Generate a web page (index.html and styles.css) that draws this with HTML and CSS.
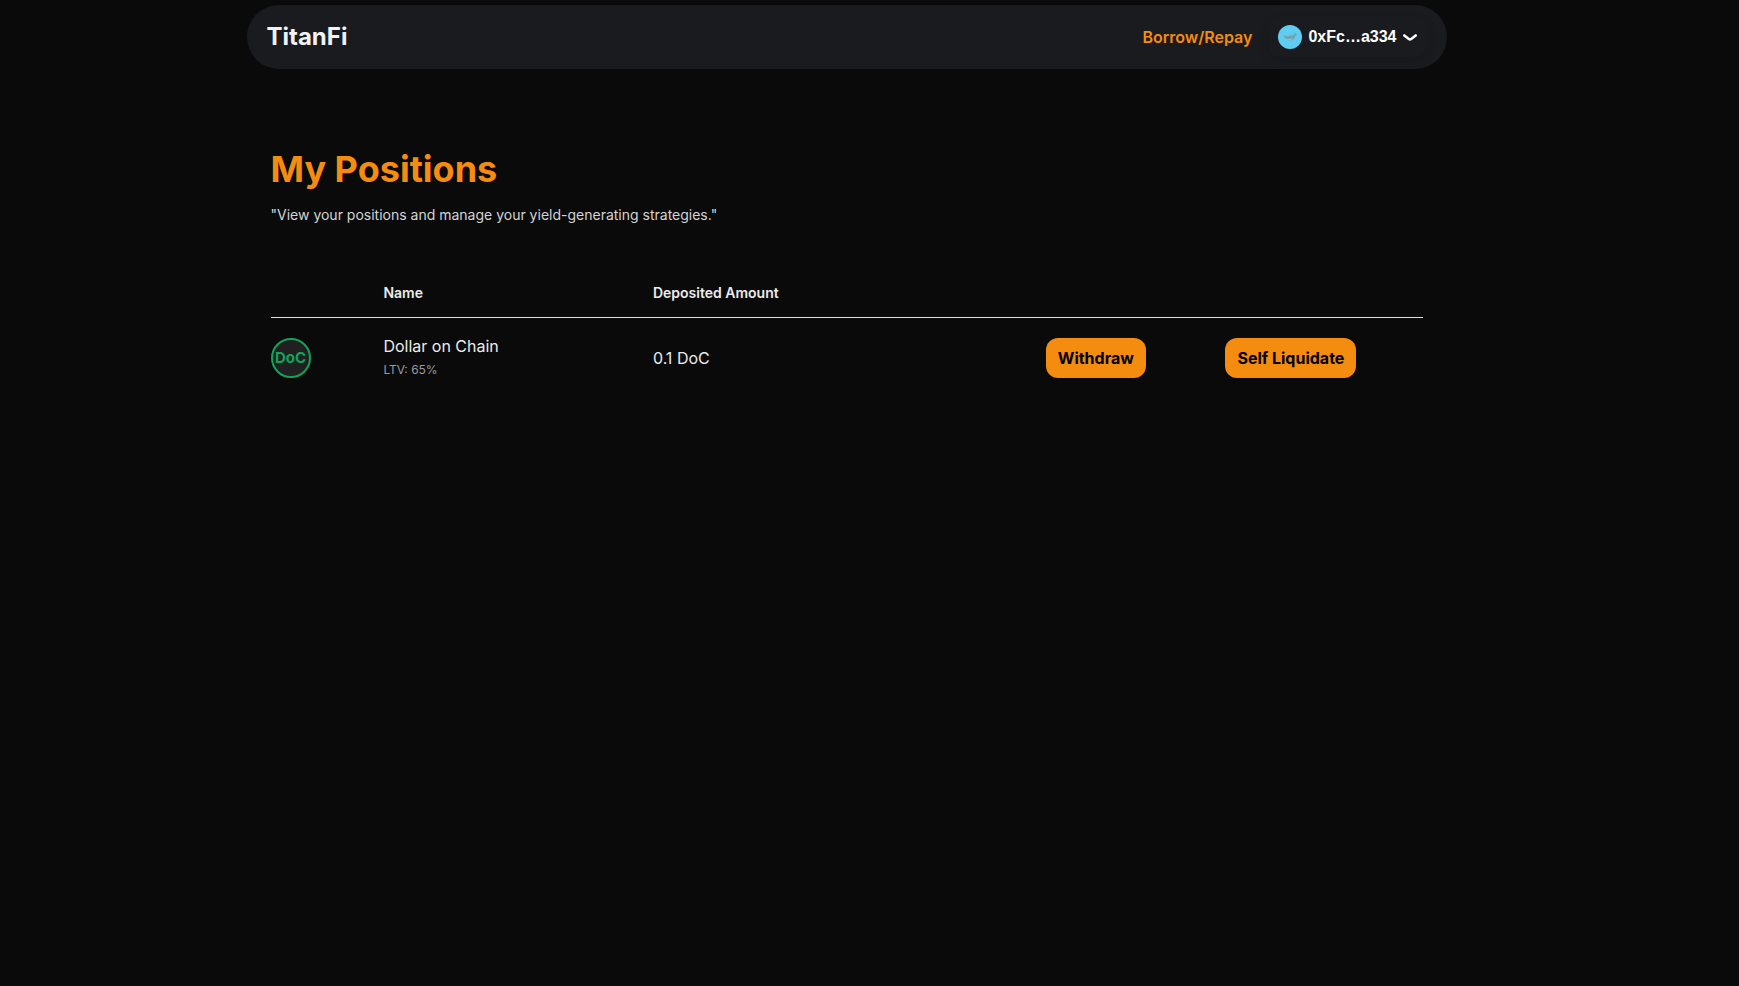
FILE: index.html
```html
<!DOCTYPE html>
<html lang="en">
<head>
<meta charset="utf-8">
<meta name="viewport" content="width=device-width, initial-scale=1">
<title>TitanFi</title>
<link rel="stylesheet" href="styles.css">
</head>
<body class="page">
<header class="navbar">
  <a class="brand" href="#">TitanFi</a>
  <nav class="nav-actions">
    <a class="nav-link" href="#">Borrow/Repay</a>
    <button class="account" type="button">
      <svg class="account-avatar" viewBox="0 0 24 24" aria-hidden="true">
        <circle cx="12" cy="12" r="12" fill="#5fcdf1"/>
        <path d="M5 10.300c1.500-.3 3 .9 5.500.7 2.500-.1 4-1 5.500-1.500l1.300-2.300.7 2 1.200.3-1.500 1.300c-.8 2.800-2.700 4.700-5.200 4.700-3 0-5.500-1.700-7.500-5.200z" fill="#6fa5b2"/>
        <path d="M7.500 13.500c2.500.9 5 .8 7.500-.5-1.500 2.500-5.500 3-7.500.5z" fill="#a0bdc2"/>
      </svg>
      <span>0xFc…a334</span>
      <svg class="account-chevron" viewBox="0 0 14 7" aria-hidden="true">
        <path d="M1.300 1.400 5.800 4.900a2 2 0 0 0 2.400 0l4.500-3.500" fill="none" stroke="#fff" stroke-width="2.500" stroke-linecap="round" stroke-linejoin="round"/>
      </svg>
    </button>
  </nav>
</header>
<main class="content">
  <h1 class="title">My Positions</h1>
  <p class="subtitle">"View your positions and manage your yield-generating strategies."</p>
  <table class="positions">
    <colgroup>
      <col class="col-token">
      <col class="col-name">
      <col class="col-amount">
      <col class="col-withdraw">
      <col class="col-liquidate">
    </colgroup>
    <thead>
      <tr>
        <td></td>
        <th scope="col">Name</th>
        <th scope="col">Deposited Amount</th>
        <td></td>
        <td></td>
      </tr>
    </thead>
    <tbody>
      <tr>
        <td><span class="token">DoC</span></td>
        <td>
          <div class="asset-name">Dollar on Chain</div>
          <div class="asset-ltv">LTV: 65%</div>
        </td>
        <td>0.1 DoC</td>
        <td><button class="action" type="button">Withdraw</button></td>
        <td><button class="action" type="button">Self Liquidate</button></td>
      </tr>
    </tbody>
  </table>
</main>
</body>
</html>
```

FILE: styles.css
```css
* {
  box-sizing: border-box;
}

.page {
  margin: 0;
  min-height: 100vh;
  padding: 5px 46px 0 0;
  background: #0a0a0a;
  color: #ececec;
  font: 16px/24px Inter, sans-serif;
}

.navbar {
  display: flex;
  align-items: center;
  justify-content: space-between;
  max-width: 1200px;
  height: 64px;
  margin: 0 auto;
  padding: 0 20px;
  border-radius: 32px;
  background: #1a1b1f;
}

.brand {
  color: #f1f3f9;
  font-size: 24px;
  line-height: 32px;
  font-weight: 700;
  text-decoration: none;
}

.nav-actions {
  display: flex;
  align-items: center;
  gap: 16px;
}

.nav-link {
  color: #f48c0f;
  font-weight: 600;
  text-decoration: none;
}

.account {
  display: flex;
  align-items: center;
  gap: 6px;
  height: 40px;
  padding: 0 10px;
  border: 0;
  border-radius: 12px;
  background: #1a1b1f;
  box-shadow: 0 4px 12px rgba(0, 0, 0, 0.1);
  color: #fff;
  font: 700 16px/20px "Liberation Sans", sans-serif;
}

.account-avatar {
  width: 24px;
  height: 24px;
}

.account-chevron {
  width: 14px;
  height: 7px;
}

.content {
  max-width: 1200px;
  margin: 0 auto;
  padding: 80px 24px;
}

.title {
  margin: 0;
  color: #f48c0f;
  font-size: 36px;
  line-height: 40px;
  font-weight: 700;
}

.subtitle {
  margin: 16px 0 44px;
  color: #d4d4d4;
  font-size: 14px;
  line-height: 20px;
}

.positions {
  width: 100%;
  table-layout: fixed;
  border-collapse: separate;
  border-spacing: 0;
}

.positions th,
.positions td {
  padding: 0;
  text-align: left;
}

.positions th {
  height: 49px;
  font-size: 14px;
  line-height: 20px;
  font-weight: 600;
}

.positions thead th,
.positions thead td {
  border-bottom: 1px solid #dfe2dc;
}

.positions tbody td {
  height: 80px;
}

.col-token {
  width: 9.8%;
}

.col-name {
  width: 23.4%;
}

.col-amount {
  width: 34.1%;
}

.col-withdraw {
  width: 15.6%;
}

.col-liquidate {
  width: 17.1%;
}

.token {
  display: flex;
  align-items: center;
  justify-content: center;
  width: 40px;
  height: 40px;
  border: 2px solid #10a35a;
  border-radius: 50%;
  background: #202021;
  color: #10a35a;
  font-size: 15px;
  font-weight: 700;
}

.asset-ltv {
  color: #9a9aa2;
  font-size: 12px;
  line-height: 24px;
}

.action {
  display: block;
  height: 40px;
  padding: 0 12px;
  border: 0;
  border-radius: 12px;
  background: #f48c0f;
  color: #000;
  font: 700 16px/24px Inter, sans-serif;
}
```
